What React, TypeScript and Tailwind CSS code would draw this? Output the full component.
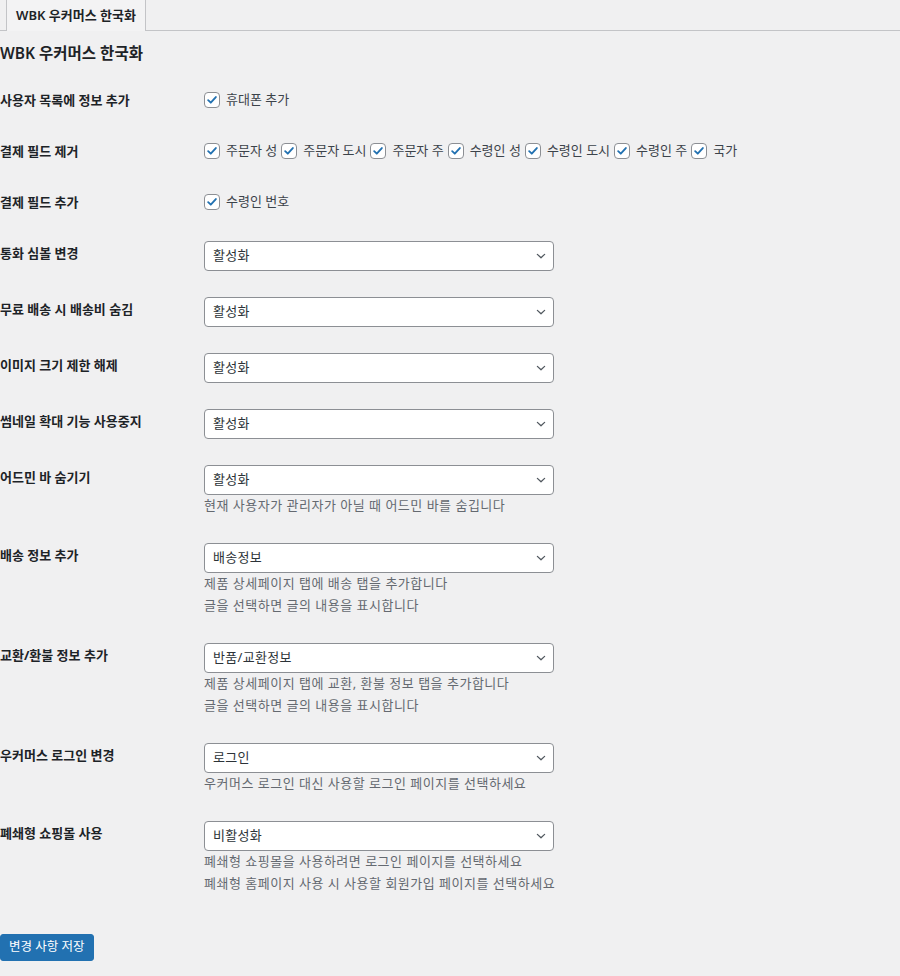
import React from "react";

const FONT = { fontFamily: '"Noto Sans", "Noto Sans CJK KR", sans-serif' };

function Check() {
  return (
    <span className="relative inline-flex h-[16px] w-[16px] shrink-0 items-center justify-center rounded-[4px] border border-[#8c8f94] bg-white">
      <svg viewBox="0 0 16 16" className="h-[14px] w-[14px]">
        <path d="M3.6 8.2 L6.6 11.1 L12.4 4.6" fill="none" stroke="#2271b1" strokeWidth="2.1" strokeLinecap="round" strokeLinejoin="round" />
      </svg>
    </span>
  );
}

function CheckItem({ text }: { text: string }) {
  return (
    <label className="inline-flex items-center">
      <Check />
      <span className="ml-[6px] mr-[4px] text-[13px] text-[#3c434a]">{text}</span>
    </label>
  );
}

function Select({ value }: { value: string }) {
  return (
    <div className="flex h-[30px] w-[350px] items-center justify-between rounded-[4px] border border-[#8c8f94] bg-white pl-[8px] pr-[4px]">
      <span className="text-[13px] tracking-[0.3px] text-[#2c3338]">{value}</span>
      <svg viewBox="0 0 20 20" className="h-[16px] w-[16px]">
        <path d="M5.5 8 L10 12.2 L14.5 8" fill="none" stroke="#50575e" strokeWidth="1.6" strokeLinecap="round" strokeLinejoin="round" />
      </svg>
    </div>
  );
}

function Desc({ lines }: { lines: string[] }) {
  return (
    <div>
      {lines.map((l) => (
        <div key={l} className="flex h-[22px] items-center overflow-hidden whitespace-nowrap text-[13px] tracking-[0.5px] text-[#646970]">
          {l}
        </div>
      ))}
    </div>
  );
}

function Row({ label, children, check }: { label: string; children: React.ReactNode; check?: boolean }) {
  return (
    <div className={check ? "flex pt-[15px] pb-[16px]" : "flex pt-[13px] pb-[13px]"}>
      <div className={check ? "w-[204px] shrink-0 text-[13px] font-bold leading-[20px] text-[#1d2327]" : "w-[204px] shrink-0 pt-[2px] text-[13px] font-bold leading-[20px] text-[#1d2327]"}>
        {label}
      </div>
      <div className={check ? "flex min-h-[20px] items-center" : ""}>{children}</div>
    </div>
  );
}

export default function App() {
  const billing = ["주문자 성", "주문자 도시", "주문자 주", "수령인 성", "수령인 도시", "수령인 주", "국가"];
  return (
    <div className="min-h-[976px] w-[900px] bg-[#f0f0f1] text-[#3c434a]" style={FONT}>
      <div className="flex h-[31px] border-b border-[#c3c4c7] pl-[6px]">
        <div className="-mb-px flex h-[31px] items-center border-x border-[#c3c4c7] bg-[#f3f3f4] px-[9px] text-[13px] font-semibold text-[#1d2327]">
          WBK 우커머스 한국화
        </div>
      </div>
      <h2 className="mt-[12px] text-[15.5px] font-semibold leading-[21px] text-[#1d2327]">WBK 우커머스 한국화</h2>
      <div className="mt-[11px]">
        <Row label="사용자 목록에 정보 추가" check>
          <CheckItem text="휴대폰 추가" />
        </Row>
        <Row label="결제 필드 제거" check>
          {billing.map((b) => (
            <CheckItem key={b} text={b} />
          ))}
        </Row>
        <Row label="결제 필드 추가" check>
          <CheckItem text="수령인 번호" />
        </Row>
        <Row label="통화 심볼 변경">
          <Select value="활성화" />
        </Row>
        <Row label="무료 배송 시 배송비 숨김">
          <Select value="활성화" />
        </Row>
        <Row label="이미지 크기 제한 해제">
          <Select value="활성화" />
        </Row>
        <Row label="썸네일 확대 기능 사용중지">
          <Select value="활성화" />
        </Row>
        <Row label="어드민 바 숨기기">
          <Select value="활성화" />
          <Desc lines={["현재 사용자가 관리자가 아닐 때 어드민 바를 숨깁니다"]} />
        </Row>
        <Row label="배송 정보 추가">
          <Select value="배송정보" />
          <Desc lines={["제품 상세페이지 탭에 배송 탭을 추가합니다", "글을 선택하면 글의 내용을 표시합니다"]} />
        </Row>
        <Row label="교환/환불 정보 추가">
          <Select value="반품/교환정보" />
          <Desc lines={["제품 상세페이지 탭에 교환, 환불 정보 탭을 추가합니다", "글을 선택하면 글의 내용을 표시합니다"]} />
        </Row>
        <Row label="우커머스 로그인 변경">
          <Select value="로그인" />
          <Desc lines={["우커머스 로그인 대신 사용할 로그인 페이지를 선택하세요"]} />
        </Row>
        <Row label="폐쇄형 쇼핑몰 사용">
          <Select value="비활성화" />
          <Desc lines={["폐쇄형 쇼핑몰을 사용하려면 로그인 페이지를 선택하세요", "폐쇄형 홈페이지 사용 시 사용할 회원가입 페이지를 선택하세요"]} />
        </Row>
      </div>
      <div className="mt-[25px]">
        <button className="h-[27px] rounded-[3px] border border-[#2271b1] bg-[#2271b1] px-[8px] text-[12.5px] text-white">
          변경 사항 저장
        </button>
      </div>
    </div>
  );
}
